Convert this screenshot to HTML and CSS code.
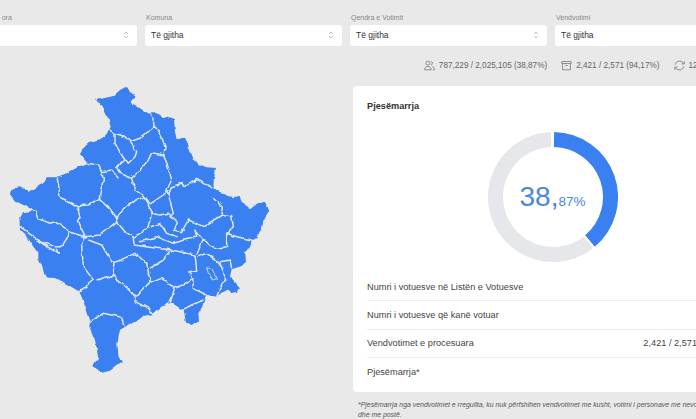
FILE: index.html
```html
<!DOCTYPE html>
<html lang="sq">
<head>
<meta charset="utf-8">
<title>Pjesëmarrja</title>
<link rel="stylesheet" href="styles.css">
</head>
<body>
<div class="page">
  <div class="filters">
    <label class="filter"><span class="filter-label">Përditësimi sipas e ora</span><span class="select"><span></span><svg class="updown" viewBox="0 0 8 12"><path d="M1.500 4.500 4 2l2.500 2.500M1.500 7.500 4 10l2.500-2.500"/></svg></span></label>
    <label class="filter"><span class="filter-label">Komuna</span><span class="select"><span>Të gjitha</span><svg class="updown" viewBox="0 0 8 12"><path d="M1.500 4.500 4 2l2.500 2.500M1.500 7.500 4 10l2.500-2.500"/></svg></span></label>
    <label class="filter"><span class="filter-label">Qendra e Votimit</span><span class="select"><span>Të gjitha</span><svg class="updown" viewBox="0 0 8 12"><path d="M1.500 4.500 4 2l2.500 2.500M1.500 7.500 4 10l2.500-2.500"/></svg></span></label>
    <label class="filter"><span class="filter-label">Vendvotimi</span><span class="select"><span>Të gjitha</span><svg class="updown" viewBox="0 0 8 12"><path d="M1.500 4.500 4 2l2.500 2.500M1.500 7.500 4 10l2.500-2.500"/></svg></span></label>
  </div>

  <div class="stats">
    <span class="stat"><svg class="stat-icon" viewBox="0 0 14 14"><circle cx="5" cy="4" r="2.600"/><path d="M.8 12.500c0-2.800 1.800-4.300 4.200-4.300s4.200 1.500 4.200 4.300zM9 1.700a2.500 2.500 0 0 1 0 4.700M10.500 8.400c1.700.5 2.800 1.900 2.800 4.100h-2"/></svg>787,229 / 2,025,105 (38,87%)</span>
    <span class="stat"><svg class="stat-icon" viewBox="0 0 14 14"><path d="M1 2h12v2.500H1zM2 4.500V12.500h10V4.500M5.500 7h3"/></svg>2,421 / 2,571 (94,17%)</span>
    <span class="stat"><svg class="stat-icon" viewBox="0 0 14 14"><path d="M1.500 6A5.600 5.600 0 0 1 11.500 3.500L13 5M13 1.500V5H9.500M12.500 8A5.600 5.600 0 0 1 2.500 10.500L1 9M1 12.500V9h3.500"/></svg>12:45</span>
  </div>

  <div class="main">
    <svg class="map" viewBox="0 0 840 900" aria-label="Harta e Kosovës">
      <defs>
        <filter id="rough" x="-5%" y="-5%" width="110%" height="110%">
          <feTurbulence type="fractalNoise" baseFrequency="0.045" numOctaves="2" seed="4"/>
          <feDisplacementMap in="SourceGraphic" scale="12" xChannelSelector="R" yChannelSelector="G"/>
        </filter>
      </defs>
      <g class="map-shapes">
      <path class="land" d="M378 20 385 32 410 50 392 60 392 72 420 85 445 100 458 112 452 100 470 100 490 115 505 110 522 118 525 155 530 178 555 172 565 200 580 235 595 252 620 262 648 264 642 295 640 322 655 335 675 340 682 348 705 352 715 348 722 365 750 385 770 370 795 367 805 395 790 425 785 450 770 470 755 480 750 505 735 515 738 545 725 558 695 568 690 590 705 610 720 625 712 638 695 642 685 625 655 645 650 650 622 645 610 675 595 700 597 722 575 735 558 728 552 695 540 685 515 668 490 675 460 702 430 708 415 720 375 740 360 750 352 790 355 825 365 845 330 872 300 880 280 855 295 835 285 780 268 740 270 720 255 675 238 635 205 615 170 595 135 592 128 565 115 540 115 520 100 500 85 475 60 450 58 410 70 397 105 392 70 375 45 362 32 345 38 325 60 322 85 335 100 328 130 310 140 292 168 292 200 280 240 258 262 250 240 222 250 205 270 185 300 178 320 165 332 140 325 115 310 85 288 60 340 48 360 30Z"/>
      <path class="borders" d="M320 145 345 160 375 170 390 185 420 175 445 155 462 135 458 112M462 135 485 170 495 200 492 225 510 280 515 300 500 330 505 345 520 400 510 410 530 425 520 450 545 455 565 420 590 430 610 440 665 405 670 385 640 355M345 160 345 190 365 225 375 240 350 262 360 280 395 295 420 270 445 240 455 218 492 225M390 185 410 215 405 230 385 250 378 240M262 250 295 255 305 275 335 270 355 295M305 275 310 300 300 340 298 355 265 375 225 378 180 350 172 292M395 295 405 330 435 350 450 372 490 345 505 330M298 355 325 380 350 420 360 400 385 375 410 360 435 350 445 375 455 400 445 440 420 460 400 472 375 455 350 425 300 465 255 470 232 425 240 410 230 378M505 345 515 320 545 310 555 320 590 298 635 322M665 405 695 410 700 440 680 460 710 470 755 480M105 392 115 415 150 430 165 425 205 455 255 470M60 440 100 470 135 490 165 500 185 500 210 460M255 470 245 500 250 560 280 600 238 635M265 480 305 495 335 545 345 547 342 580 335 595 320 590 290 600M345 547 405 520 440 550 450 605 415 645 405 650 405 665 445 685 460 702M342 580 350 600 390 630 405 650M400 472 402 495 470 505 515 510 585 525 590 570 570 575 578 595 525 625 485 595 460 605 450 605M515 510 490 540 450 565M525 625 510 668M578 595 580 625 620 645M595 530 620 520 660 550 680 600 660 625 650 650M660 545 690 540 695 565M545 690 575 675 610 660M270 725 310 700 365 712 372 740M420 485 470 470 520 490 590 470 585 450 610 480 600 500 590 525M680 460 680 500 650 505 625 490 610 480M450 400 480 405 505 400 515 410M450 440 480 430 500 460 530 470M110 480 150 505 175 520 165 498"/>
      <path class="ring" d="M620 560 635 565 650 595 640 600 625 580Z"/>
      </g>
    </svg>

    <section class="card">
      <h2 class="card-title">Pjesëmarrja</h2>
      <div class="donut">
        <svg class="donut-ring" viewBox="0 0 130 130">
          <path class="track" d="M100.400 110.300A57.500 57.500 0 1 1 63 7.500"/>
          <path class="arc" d="M66 7.500A57.500 57.500 0 0 1 102 109"/>
        </svg>
        <div class="donut-value">38,<small>87%</small></div>
      </div>
      <div class="rows">
        <div class="row"><span>Numri i votuesve në Listën e Votuesve</span></div>
        <div class="row"><span>Numri i votuesve që kanë votuar</span></div>
        <div class="row"><span>Vendvotimet e procesuara</span><span>2,421 / 2,571</span></div>
        <div class="row"><span>Pjesëmarrja*</span></div>
      </div>
    </section>
  </div>
  <p class="note">*Pjesëmarrja nga vendvotimet e rregullta, ku nuk përfshihen vendvotimet me kusht, votimi i personave me nevojë të veçanta dhe me postë.</p>
</div>
</body>
</html>
```
FILE: styles.css
```css
* { box-sizing: border-box; }
html, body { margin: 0; height: 100%; overflow: hidden; background: #e9e9e9; }
body { font-family: "Liberation Sans", Arial, sans-serif; color: #333; }

.page { width: 771px; margin-left: -60px; padding-top: 13px; }

.filters { display: flex; gap: 8.500px; }
.filter { display: flex; flex-direction: column; gap: 3px; width: 196.500px; flex: none; }
.filter-label { font-size: 7px; line-height: 9px; color: #888; padding-left: 1px; }
.select { display: flex; align-items: center; justify-content: space-between; height: 20.500px; padding: 0 8px 0 6px; background: #fff; border-radius: 3px; font-size: 8.500px; color: #333; }
.updown { width: 6px; height: 10px; fill: none; stroke: #aaa; stroke-width: 1; }

.stats { display: flex; justify-content: flex-end; align-items: center; gap: 14px; height: 14px; margin-top: 12.500px; margin-right: 2px; font-size: 8.200px; color: #666; white-space: nowrap; }
.stat { display: flex; align-items: center; gap: 4px; }
.stat-icon { width: 11px; height: 11px; fill: none; stroke: #777; stroke-width: 1; }

.main { display: flex; justify-content: space-between; align-items: flex-start; margin-top: 14px; }
.map { width: 280px; height: 300px; margin-left: 60px; margin-top: -6px; flex: none; }
.map-shapes { filter: url(#rough); }
.land { fill: #3b80f0; stroke: none; }
.borders, .ring { fill: none; stroke: #dfe8f7; stroke-width: 4.500px; stroke-linejoin: round; }
.ring { stroke-width: 2.500px; }

.card { width: 358px; height: 306px; padding: 14px 14px 0; background: #fff; border-radius: 4px; flex: none; }
.card-title { margin: 0; font-size: 9.200px; line-height: 12px; font-weight: bold; color: #333; }
.donut { position: relative; width: 130px; height: 130px; margin: 20px auto 0; left: 20.500px; }
.donut-ring { display: block; width: 130px; height: 130px; }
.track { fill: none; stroke: #e6e7ea; stroke-width: 15; }
.arc { fill: none; stroke: #3b80f0; stroke-width: 15; }
.donut-value { position: absolute; inset: 0; display: flex; align-items: center; justify-content: center; font-size: 28px; color: #4a86dc; }
.donut-value small { font-size: 13.500px; margin-top: 8px; }

.rows { margin-top: 11px; }
.row { display: flex; justify-content: space-between; align-items: center; height: 28.300px; font-size: 9.200px; color: #444; border-bottom: 1px solid #eee; }
.row:last-child { border-bottom: 0; }

.note { width: 385px; margin: 8px 0 0 418px; font-size: 6.900px; line-height: 10px; font-style: italic; color: #555; }
```
